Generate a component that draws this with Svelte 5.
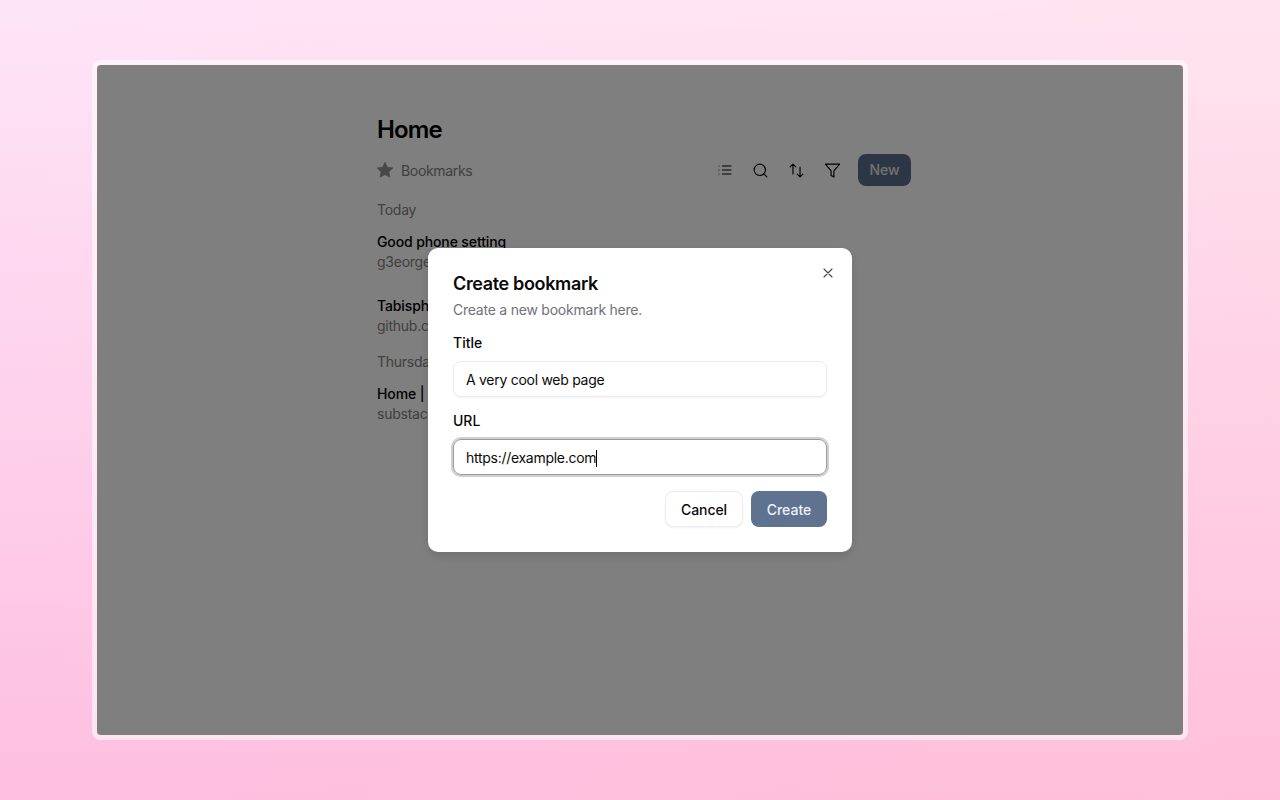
<script>
  const groups = [
    { label: 'Today', items: [
      { title: 'Good phone setting', host: 'g3eorge.com' },
      { title: 'Tabisphere', host: 'github.com' }
    ]},
    { label: 'Thursday', items: [
      { title: 'Home | Substack', host: 'substack.com' }
    ]}
  ];
</script>

<div class="desktop">
  <div class="frame">
    <div class="window">
      <main class="page">
        <h1>Home</h1>
        <div class="toolbar">
          <div class="crumb">
            <svg class="star" viewBox="0 0 24 24" width="18" height="18"><path d="M12 1.6l3.2 6.7 7.3.95-5.35 5.05 1.38 7.25L12 18.05 5.47 21.55l1.38-7.25L1.5 9.25l7.3-.95z" fill="currentColor" stroke="currentColor" stroke-width="1" stroke-linejoin="round"/></svg>
            <span>Bookmarks</span>
          </div>
          <div class="tools">
            <span class="tool list"><svg viewBox="0 0 24 24" width="16" height="16" class="ic"><path d="M8 6h13M8 12h13M8 18h13M3 6h.01M3 12h.01M3 18h.01"/></svg></span>
            <span class="tool"><svg viewBox="0 0 24 24" width="17" height="17" class="ic"><circle cx="11" cy="11" r="8"/><path d="M21 21l-4.3-4.3"/></svg></span>
            <span class="tool"><svg viewBox="0 0 24 24" width="17" height="17" class="ic"><path d="M11 7L7 3 3 7M7 3v14M21 17l-4 4-4-4M17 21V7"/></svg></span>
            <span class="tool"><svg viewBox="0 0 24 24" width="17" height="17" class="ic"><path d="M22 3H2l8 9.46V19l4 2v-8.54z"/></svg></span>
          </div>
          <button class="new">New</button>
        </div>
        {#each groups as g}
          <section>
            <h2>{g.label}</h2>
            {#each g.items as it}
              <div class="row">
                <div class="row-title">{it.title}</div>
                <div class="row-host">{it.host}</div>
              </div>
            {/each}
          </section>
        {/each}
      </main>

      <div class="overlay">
        <div class="modal">
          <button class="close" aria-label="Close"><svg viewBox="0 0 24 24" width="16" height="16" class="ic x"><path d="M18 6L6 18M6 6l12 12"/></svg></button>
          <h3>Create bookmark</h3>
          <p>Create a new bookmark here.</p>
          <label class="field">
            <span>Title</span>
            <div class="input">A very cool web page</div>
          </label>
          <label class="field">
            <span>URL</span>
            <div class="input focus">https://example.com<i class="caret"></i></div>
          </label>
          <div class="actions">
            <button class="cancel">Cancel</button>
            <button class="create">Create</button>
          </div>
        </div>
      </div>
    </div>
  </div>
</div>

<style>
  :global(body) {
    margin: 0;
    font-family: Inter, "Liberation Sans", sans-serif;
  }
  .desktop {
    width: 1280px;
    height: 800px;
    box-sizing: border-box;
    padding: 60px 92px;
    background:
      linear-gradient(to right, rgba(245, 185, 255, 0.15), rgba(255, 190, 205, 0.18)),
      linear-gradient(to bottom, #ffecf6 0%, #ffbfdb 100%);
  }
  .frame {
    height: 100%;
    box-sizing: border-box;
    border: 5px solid rgba(255, 255, 255, 0.55);
    border-radius: 8px;
  }
  .window {
    position: relative;
    height: 100%;
    background: #fff;
    border-radius: 4px;
    overflow: hidden;
  }
  .page {
    width: 534px;
    padding: 49px 0 0 280px;
    color: #000;
    font-size: 14px;
    line-height: 20px;
    letter-spacing: -0.25px;
  }
  h1 {
    margin: 0 0 8px;
    font-size: 24px;
    line-height: 32px;
    font-weight: 600;
    letter-spacing: -0.9px;
  }
  .toolbar {
    display: flex;
    align-items: center;
    height: 32px;
    margin-bottom: 14px;
  }
  .crumb {
    display: flex;
    align-items: center;
    gap: 7px;
    color: #808080;
    flex: 1;
    letter-spacing: -0.33px;
  }
  .crumb span { padding-top: 1px; }
  .star { color: #909090; margin-left: -1px; }
  .tools {
    display: flex;
    margin-right: 8px;
  }
  .tool {
    width: 36px;
    height: 32px;
    display: flex;
    align-items: center;
    justify-content: center;
  }
  .tool.list { padding-left: 1px; box-sizing: border-box; }
  .ic {
    fill: none;
    stroke: currentColor;
    stroke-width: 1.6;
    stroke-linecap: round;
    stroke-linejoin: round;
  }
  .new {
    width: 53px;
    height: 32px;
    border: 0;
    border-radius: 8px;
    background: #5a6c8a;
    color: #e4e4e4;
    font: 500 14px/20px Inter, sans-serif;
    letter-spacing: -0.1px;
    padding: 0;
  }
  section { margin-bottom: 16px; }
  h2 {
    margin: 0 0 12px;
    font-size: 14px;
    line-height: 20px;
    font-weight: 400;
    color: #808080;
  }
  .row { margin-bottom: 24px; }
  .row:last-child { margin-bottom: 0; }
  .row-title { font-weight: 500; letter-spacing: -0.12px; }
  .row-host { color: #808080; }

  .overlay {
    position: absolute;
    inset: 0;
    background: rgba(0, 0, 0, 0.5);
    display: flex;
    align-items: center;
    justify-content: center;
  }
  .modal {
    position: relative;
    width: 424px;
    box-sizing: border-box;
    padding: 24px 25px 25px;
    background: #fff;
    border-radius: 10px;
    box-shadow: 0 4px 10px rgba(0, 0, 0, 0.12);
    color: #0a0a0a;
    font-size: 14px;
    line-height: 20px;
  }
  .close {
    position: absolute;
    top: 17px;
    right: 16px;
    width: 16px;
    height: 16px;
    padding: 0;
    border: 0;
    background: none;
    color: #444;
    display: flex;
  }
  h3 {
    margin: 0 0 4px;
    padding-top: 1px;
    font-size: 18px;
    line-height: 22px;
    font-weight: 600;
    letter-spacing: -0.35px;
  }
  p {
    margin: 0 0 12px;
    padding-top: 1px;
    color: #71717a;
    letter-spacing: -0.23px;
  }
  .field {
    display: block;
    margin-bottom: 13px;
    font-weight: 500;
  }
  .field span {
    display: block;
    padding-top: 1px;
    margin-bottom: 8px;
  }
  .input {
    height: 36px;
    box-sizing: border-box;
    padding: 2px 12px 0;
    display: flex;
    align-items: center;
    border: 1px solid #ececee;
    border-radius: 8px;
    box-shadow: 0 1px 2px rgba(0, 0, 0, 0.05);
    font-weight: 400;
    letter-spacing: -0.28px;
  }
  .input.focus {
    border-color: #9a9a9a;
    box-shadow: 0 0 0 2px #cfcfcf;
  }
  .caret {
    display: inline-block;
    width: 1px;
    height: 17px;
    background: #000;
  }
  .actions {
    display: flex;
    justify-content: flex-end;
    gap: 8px;
    margin-top: 16px;
  }
  .actions button {
    height: 36px;
    padding: 2px 0 0;
    border-radius: 8px;
    font: 500 14px/20px Inter, sans-serif;
  }
  .cancel {
    width: 78px;
    background: #fff;
    color: #0a0a0a;
    border: 1px solid #ececee;
    box-shadow: 0 1px 2px rgba(0, 0, 0, 0.05);
    letter-spacing: -0.1px;
  }
  .create {
    width: 76px;
    background: #5f7390;
    color: #eef1f5;
    border: 0;
  }
</style>
